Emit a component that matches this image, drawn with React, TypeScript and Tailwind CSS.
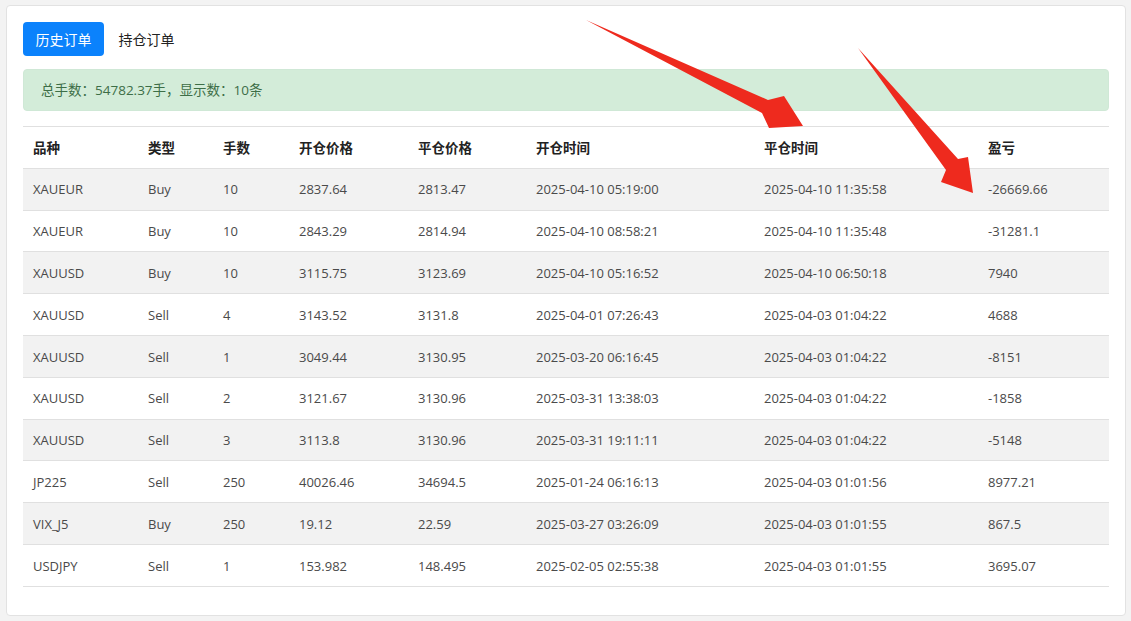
import React from "react";

const rows = [
  ["XAUEUR", "Buy", "10", "2837.64", "2813.47", "2025-04-10 05:19:00", "2025-04-10 11:35:58", "-26669.66"],
  ["XAUEUR", "Buy", "10", "2843.29", "2814.94", "2025-04-10 08:58:21", "2025-04-10 11:35:48", "-31281.1"],
  ["XAUUSD", "Buy", "10", "3115.75", "3123.69", "2025-04-10 05:16:52", "2025-04-10 06:50:18", "7940"],
  ["XAUUSD", "Sell", "4", "3143.52", "3131.8", "2025-04-01 07:26:43", "2025-04-03 01:04:22", "4688"],
  ["XAUUSD", "Sell", "1", "3049.44", "3130.95", "2025-03-20 06:16:45", "2025-04-03 01:04:22", "-8151"],
  ["XAUUSD", "Sell", "2", "3121.67", "3130.96", "2025-03-31 13:38:03", "2025-04-03 01:04:22", "-1858"],
  ["XAUUSD", "Sell", "3", "3113.8", "3130.96", "2025-03-31 19:11:11", "2025-04-03 01:04:22", "-5148"],
  ["JP225", "Sell", "250", "40026.46", "34694.5", "2025-01-24 06:16:13", "2025-04-03 01:01:56", "8977.21"],
  ["VIX_J5", "Buy", "250", "19.12", "22.59", "2025-03-27 03:26:09", "2025-04-03 01:01:55", "867.5"],
  ["USDJPY", "Sell", "1", "153.982", "148.495", "2025-02-05 02:55:38", "2025-04-03 01:01:55", "3695.07"],
];

const headers = ["品种", "类型", "手数", "开仓价格", "平仓价格", "开仓时间", "平仓时间", "盈亏"];
const widths = [115, 75, 76, 119, 118, 228, 224, 131];

export default function App() {
  return (
    <div
      className="relative min-h-screen bg-[#f3f3f3] pt-[5px] pl-[6px] pr-[5px] pb-[5px]"
      style={{ fontFamily: '"Open Sans", "Noto Sans CJK SC", sans-serif' }}
    >
      <div className="h-[611px] rounded-[4px] border border-[#e2e2e2] bg-white px-[16px] pt-[16px]">
        <div className="flex items-center">
          <button className="h-[34px] w-[81px] rounded-[4px] bg-[#0b82fc] text-[14px] text-white">
            历史订单
          </button>
          <button className="ml-[2px] h-[34px] w-[81px] rounded-[4px] text-[14px] text-[#222]">
            持仓订单
          </button>
        </div>
        <div className="mt-[13px] flex h-[42px] items-center rounded-[4px] border border-[#cfe8d6] bg-[#d3ecd9] px-[17px] text-[13.5px] text-[#3d6e47]">
          总手数：54782.37手，显示数：10条
        </div>
        <table className="mt-[15px] w-full table-fixed border-collapse text-[13px]">
          <colgroup>
            {widths.map((w, i) => (
              <col key={i} style={{ width: w }} />
            ))}
          </colgroup>
          <thead>
            <tr className="h-[41.8px] border-t border-[#e0e0e0]">
              {headers.map((h) => (
                <th key={h} className="px-[10px] pt-[1px] text-left text-[13.5px] font-bold text-[#222]">
                  {h}
                </th>
              ))}
            </tr>
          </thead>
          <tbody>
            {rows.map((r, i) => (
              <tr
                key={i}
                className={`h-[41.8px] border-t border-b border-[#e0e0e0] ${i % 2 === 0 ? "bg-[#f2f2f2]" : "bg-white"}`}
              >
                {r.map((c, j) => (
                  <td key={j} className="px-[10px] pt-[2px] text-left text-[#4a4a4a]">
                    {c}
                  </td>
                ))}
              </tr>
            ))}
          </tbody>
        </table>
      </div>
      <svg className="pointer-events-none absolute left-0 top-0" width="1131" height="621">
        <polygon
          points="586,20 768,100 784,96 803,126 769,128 762,113"
          fill="#ee2a1e"
        />
        <polygon
          points="858,48 958,159 968,157 973,193 941,182 946,170"
          fill="#ee2a1e"
        />
      </svg>
    </div>
  );
}
